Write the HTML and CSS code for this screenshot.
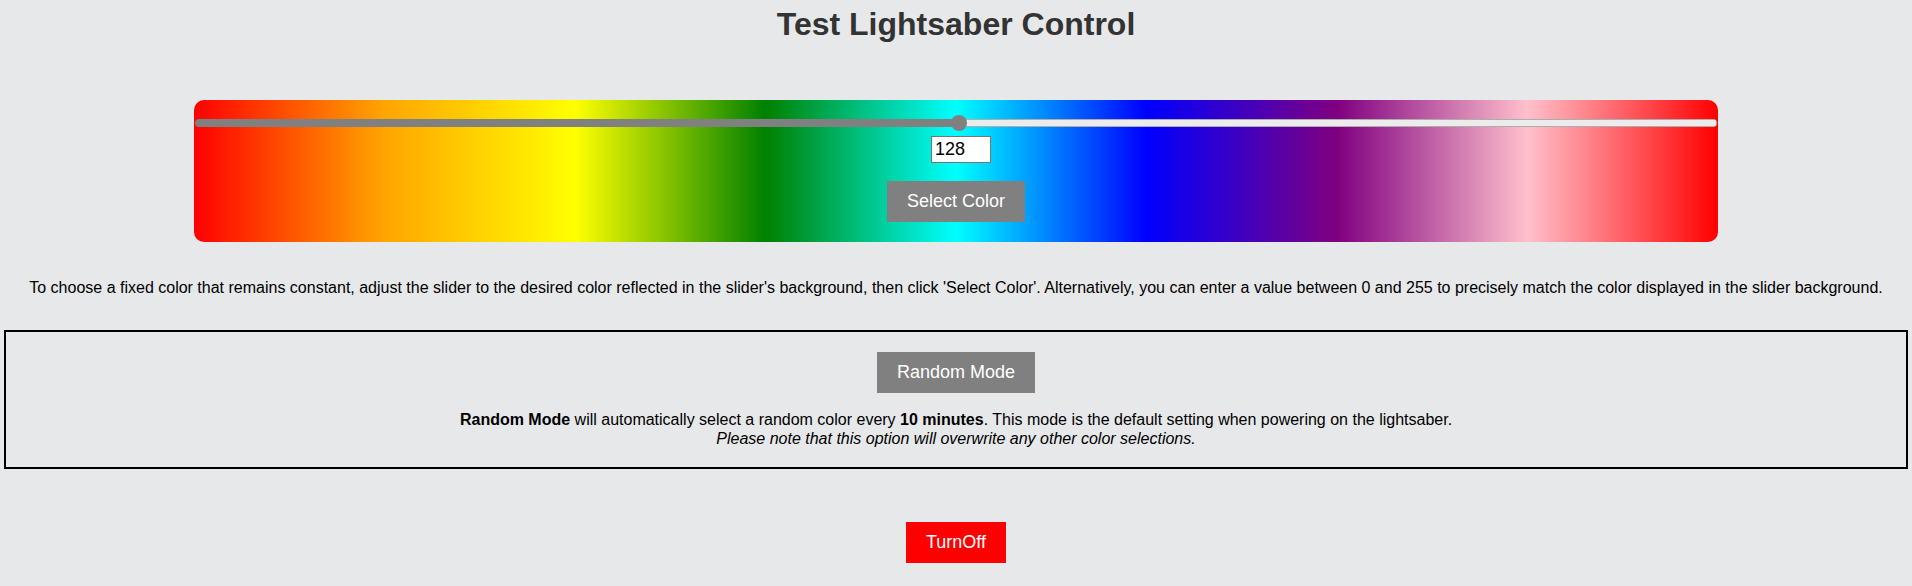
FILE: index.html
```html
<!DOCTYPE html>
<html lang="en">
<head>
<meta charset="utf-8">
<title>Test Lightsaber Control</title>
<link rel="stylesheet" href="styles.css">
</head>
<body>
  <h1 class="title">Test Lightsaber Control</h1>

  <section class="picker">
    <input class="hue-slider" type="range" min="0" max="255" value="128" style="--fill: 50.2%">
    <input class="hue-value" type="number" min="0" max="255" value="128">
    <button class="btn btn-gray picker-btn" type="button">Select Color</button>
  </section>

  <p class="hint">To choose a fixed color that remains constant, adjust the slider to the desired color reflected in the slider's background, then click 'Select Color'. Alternatively, you can enter a value between 0 and 255 to precisely match the color displayed in the slider background.</p>

  <section class="random-box">
    <button class="btn btn-gray" type="button">Random Mode</button>
    <p class="random-text"><b>Random Mode</b> will automatically select a random color every <b>10 minutes</b>. This mode is the default setting when powering on the lightsaber.<br><i>Please note that this option will overwrite any other color selections.</i></p>
  </section>

  <div class="power">
    <button class="btn btn-red" type="button">TurnOff</button>
  </div>
</body>
</html>
```

FILE: styles.css
```css
* { box-sizing: border-box; }

body {
  margin: 0;
  background: #e7e8ea;
  font-family: "Liberation Sans", Arial, sans-serif;
  color: #000;
  font-size: 16px;
}

.title {
  margin: 6px 0 0;
  font-size: 32px;
  line-height: 37px;
  font-weight: bold;
  color: #333;
  text-align: center;
}

.picker {
  width: 1524px;
  margin: 57px auto 0;
  padding: 15px 1px 20px;
  border-radius: 10px;
  background: linear-gradient(to right, #ff0000, #ffa500, #ffff00, #008000, #00ffff, #0000ff, #800080, #ffc0cb, #ff0000);
  display: flex;
  flex-direction: column;
  align-items: center;
}

.hue-slider {
  -webkit-appearance: none;
  appearance: none;
  width: 100%;
  height: 16px;
  margin: 0;
  background: transparent;
  display: block;
}

.hue-slider::-webkit-slider-runnable-track {
  height: 8px;
  border-radius: 4px;
  background:
    linear-gradient(to right, #808080 var(--fill), transparent var(--fill)),
    linear-gradient(#ececec, #ececec) center / calc(100% - 2px) calc(100% - 2px) no-repeat,
    #adadad;
}

.hue-slider::-webkit-slider-thumb {
  -webkit-appearance: none;
  appearance: none;
  width: 16px;
  height: 16px;
  margin-top: -4px;
  border-radius: 50%;
  background: #808080;
  border: none;
}

.hue-value {
  margin: 5px 0 0 10px;
  width: 60px;
  height: 27px;
  padding: 2px 3px;
  border: 1px solid #767676;
  background: #fff;
  font-family: "Liberation Sans", Arial, sans-serif;
  font-size: 18px;
  color: #000;
}

.btn {
  border: none;
  padding: 10px 20px;
  font-family: "Liberation Sans", Arial, sans-serif;
  font-size: 18px;
  line-height: 21px;
  color: #fff;
  cursor: pointer;
}

.btn-gray { background: #808080; }
.btn-red { background: #ff0000; }

.picker-btn { margin-top: 18px; }

.hint {
  margin: 37px 0 33px;
  text-align: center;
  line-height: 18px;
}

.random-box {
  margin: 0 4px;
  border: 2px solid #000;
  padding: 20px 0 19px;
  display: flex;
  flex-direction: column;
  align-items: center;
}

.random-text {
  margin: 18px 0 0;
  text-align: center;
  line-height: 18.5px;
}

.power {
  display: flex;
  justify-content: center;
  padding-top: 53px;
}
```
